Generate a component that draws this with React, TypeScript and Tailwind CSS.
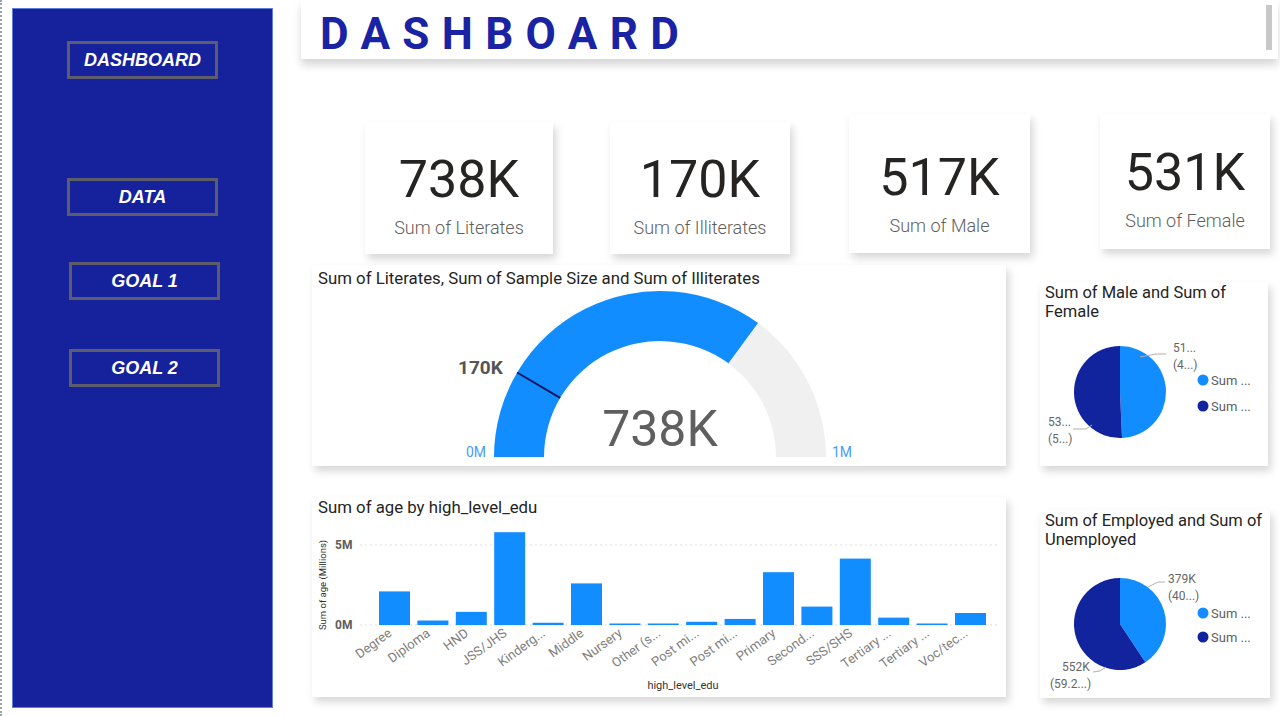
import React from 'react';

const BLUE = '#118dff';
const NAVY = '#12239e';

const NAV = [
  { label: 'DASHBOARD', cls: 'mt-[32px] ml-[54px]' },
  { label: 'DATA', cls: 'mt-[99px] ml-[54px]' },
  { label: 'GOAL 1', cls: 'mt-[46px] ml-[56px]' },
  { label: 'GOAL 2', cls: 'mt-[49px] ml-[56px]' },
];

const KPIS = [
  { value: '738K', label: 'Sum of Literates', cls: 'mt-[63px] ml-[64px] w-[188px] h-[132px] pt-[32px]' },
  { value: '170K', label: 'Sum of Illiterates', cls: 'mt-[63px] ml-[57px] w-[180px] h-[132px] pt-[32px]' },
  { value: '517K', label: 'Sum of Male', cls: 'mt-[55px] ml-[59px] w-[181px] h-[139px] pt-[38px]' },
  { value: '531K', label: 'Sum of Female', cls: 'mt-[55px] ml-[70px] w-[170px] h-[135px] pt-[33px]' },
];

const BARS: [string, number][] = [
  ['Degree', 2.1],
  ['Diploma', 0.28],
  ['HND', 0.82],
  ['JSS/JHS', 5.8],
  ['Kinderg...', 0.14],
  ['Middle', 2.6],
  ['Nursery', 0.07],
  ['Other (s...', 0.07],
  ['Post mi...', 0.2],
  ['Post mi...', 0.38],
  ['Primary', 3.3],
  ['Second...', 1.15],
  ['SSS/SHS', 4.15],
  ['Tertiary ...', 0.46],
  ['Tertiary ...', 0.07],
  ['Voc/tec...', 0.75],
];

const font = "font-['Roboto','Liberation_Sans',sans-serif]";

// point on the gauge arc, f = 0 (left) .. 1 (right)
const gp = (f: number, r: number, cx = 348, cy = 167) => {
  const a = Math.PI * (1 - f);
  return [cx + r * Math.cos(a), cy - r * Math.sin(a)];
};

const arc = (f0: number, f1: number, R: number, r: number) => {
  const [x0, y0] = gp(f0, R);
  const [x1, y1] = gp(f1, R);
  const [x2, y2] = gp(f1, r);
  const [x3, y3] = gp(f0, r);
  return `M${x0} ${y0} A${R} ${R} 0 0 1 ${x1} ${y1} L${x2} ${y2} A${r} ${r} 0 0 0 ${x3} ${y3} Z`;
};

// pie slice from top, clockwise
const slice = (cx: number, cy: number, r: number, f0: number, f1: number) => {
  const p = (f: number) => [cx + r * Math.sin(2 * Math.PI * f), cy - r * Math.cos(2 * Math.PI * f)];
  const [x0, y0] = p(f0);
  const [x1, y1] = p(f1);
  const large = f1 - f0 > 0.5 ? 1 : 0;
  return `M${cx} ${cy} L${x0} ${y0} A${r} ${r} 0 ${large} 1 ${x1} ${y1} Z`;
};

type PieProps = {
  title: string[];
  share: number;
  cy: number;
  cardCls: string;
  top: string[];
  bottom: string[];
  topLead: string;
  botLead: string;
  topX: number;
  botX: number[];
  topY: number;
  botY: number;
  legY: number[];
};

const Pie: React.FC<PieProps> = (p) => (
  <div className={`bg-white shadow-[3px_5px_8px_rgba(0,0,0,0.16)] ${p.cardCls}`}>
    <h3 className="pl-[5px] pt-[1px] text-[16.5px] leading-[19px] text-[#252423]">
      {p.title[0]}
      <br />
      {p.title[1]}
    </h3>
    <svg width="230" height="146" className="block">
      <path d={slice(80, p.cy, 46, 0, p.share)} fill={BLUE} />
      <path d={slice(80, p.cy, 46, p.share, 1)} fill={NAVY} />
      <polyline points={p.topLead} fill="none" stroke="#b3b0ad" strokeWidth="1" />
      <polyline points={p.botLead} fill="none" stroke="#b3b0ad" strokeWidth="1" />
      <g fontSize="12" fill="#666">
        <text x={p.topX} y={p.topY}>{p.top[0]}</text>
        <text x={p.topX} y={p.topY + 17}>{p.top[1]}</text>
        <text x={p.botX[0]} y={p.botY}>{p.bottom[0]}</text>
        <text x={p.botX[1]} y={p.botY + 17}>{p.bottom[1]}</text>
      </g>
      <circle cx="163" cy={p.legY[0]} r="5.5" fill={BLUE} />
      <circle cx="163" cy={p.legY[1]} r="5.5" fill={NAVY} />
      <g fontSize="13" fill="#605e5c">
        <text x="171" y={p.legY[0] + 4.5}>Sum ...</text>
        <text x="171" y={p.legY[1] + 4.5}>Sum ...</text>
      </g>
    </svg>
  </div>
);

export default function App() {
  const needle0 = gp(0.17, 116);
  const needle1 = gp(0.17, 166);

  return (
    <div className={`flex min-h-[716px] w-[1280px] bg-white border-l-2 border-dotted border-gray-400 ${font}`}>
      {/* Sidebar */}
      <aside className="ml-[10px] mt-[8px] flex h-[700px] w-[261px] flex-col bg-[#16219c] border border-[#5f7fd8]">
        {NAV.map((n) => (
          <div
            key={n.label}
            className={`flex h-[38px] w-[151px] items-center justify-center border-[3px] border-[#5c5c6c] ${n.cls}`}
          >
            <span className="font-['Liberation_Sans',Arial,sans-serif] text-[18px] font-bold italic text-white">
              {n.label}
            </span>
          </div>
        ))}
      </aside>

      {/* Main */}
      <main className="ml-[28px] flex w-[977px] flex-col">
        <header className="flex h-[59px] items-start justify-between bg-white shadow-[0_6px_8px_rgba(0,0,0,0.16)]">
          <h1 className="ml-[19px] mt-[10px] text-[44px] font-bold leading-[48px] tracking-[0.28em] text-[#1a23a3]">
            DASHBOARD
          </h1>
          <div className="mr-[6px] mt-[5px] h-[45px] w-[6px] bg-[#c8c8c8]" />
        </header>

        {/* KPI cards */}
        <div className="flex h-[206px] items-start">
          {KPIS.map((k) => (
            <div
              key={k.label}
              className={`flex flex-col items-center bg-white shadow-[3px_5px_8px_rgba(0,0,0,0.16)] ${k.cls}`}
            >
              <span className="text-[52px] leading-none text-[#252423]">{k.value}</span>
              <span className="mt-[13px] text-[18px] font-light leading-none text-[#605e5c]">{k.label}</span>
            </div>
          ))}
        </div>

        <div className="flex">
          {/* Left column */}
          <div className="ml-[11px] flex w-[694px] flex-col gap-[31px]">
            <section className="h-[201px] bg-white shadow-[3px_5px_8px_rgba(0,0,0,0.16)]">
              <h3 className="pl-[6px] pt-[3px] text-[16.8px] leading-[20px] text-[#252423]">
                Sum of Literates, Sum of Sample Size and Sum of Illiterates
              </h3>
              <svg width="694" height="176" className="mt-[2px] block">
                <path d={arc(0, 1, 166, 116)} fill="#f0f0f0" />
                <path d={arc(0, 0.701, 166, 116)} fill={BLUE} />
                <line x1={needle0[0]} y1={needle0[1]} x2={needle1[0]} y2={needle1[1]} stroke="#0a1463" strokeWidth="2" />
                <text x="146" y="84" fontSize="19" fontWeight="700" fill="#555">170K</text>
                <text x="348" y="156" fontSize="50" textAnchor="middle" fill="#5f5f5f">738K</text>
                <text x="154" y="167" fontSize="14" fill="#4a9cf5">0M</text>
                <text x="520" y="167" fontSize="14" fill="#4a9cf5">1M</text>
              </svg>
            </section>

            <section className="h-[200px] bg-white shadow-[3px_5px_8px_rgba(0,0,0,0.16)]">
              <h3 className="pl-[6px] pt-[0px] text-[16.8px] leading-[20px] text-[#252423]">
                Sum of age by high_level_edu
              </h3>
              <svg width="694" height="180" className="block">
                <line x1="48" y1="28" x2="688" y2="28" stroke="#ddd" strokeDasharray="2 3" />
                <line x1="48" y1="108" x2="688" y2="108" stroke="#ddd" strokeDasharray="2 3" />
                <text x="23" y="32" fontSize="12" fontWeight="700" fill="#605e5c">5M</text>
                <text x="23" y="112" fontSize="12" fontWeight="700" fill="#605e5c">0M</text>
                <text transform="translate(14 68) rotate(-90)" fontSize="9.5" textAnchor="middle" fill="#333">
                  Sum of age (Millions)
                </text>
                {BARS.map(([name, v], i) => {
                  const x = 67 + i * 38.4;
                  const h = Math.max(v * 16, 1.5);
                  const cx = x + 15.5;
                  return (
                    <g key={i}>
                      <rect x={x} y={108 - h} width="31" height={h} fill={BLUE} />
                      <text
                        transform={`translate(${cx - 2} ${118}) rotate(-36)`}
                        textAnchor="end"
                        fontSize="13"
                        fill="#807e7c"
                      >
                        {name}
                      </text>
                    </g>
                  );
                })}
                <text x="371" y="172" fontSize="11" textAnchor="middle" fill="#333">high_level_edu</text>
              </svg>
            </section>
          </div>

          {/* Right column */}
          <div className="ml-[34px] flex w-[230px] flex-col">
            <Pie
              title={['Sum of Male and Sum of', 'Female']}
              share={0.493}
              cy={71}
              cardCls="mt-[17px] h-[184px] w-[228px]"
              top={['51...', '(4...)']}
              bottom={['53...', '(5...)']}
              topLead="100,36 116,33 126,33"
              botLead="33,108 46,108 52,104"
              topX={133}
              topY={31}
              botX={[8, 8]}
              botY={105}
              legY={[59, 85]}
            />
            <Pie
              title={['Sum of Employed and Sum of', 'Unemployed']}
              share={0.407}
              cy={75}
              cardCls="mt-[44px] h-[188px] w-[230px]"
              top={['379K', '(40...)']}
              bottom={['552K', '(59.2...)']}
              topLead="108,38 118,33 125,33"
              botLead="53,123 60,122 66,118"
              topX={128}
              topY={34}
              botX={[22, 10]}
              botY={122}
              legY={[64, 88]}
            />
          </div>
        </div>
      </main>
    </div>
  );
}
